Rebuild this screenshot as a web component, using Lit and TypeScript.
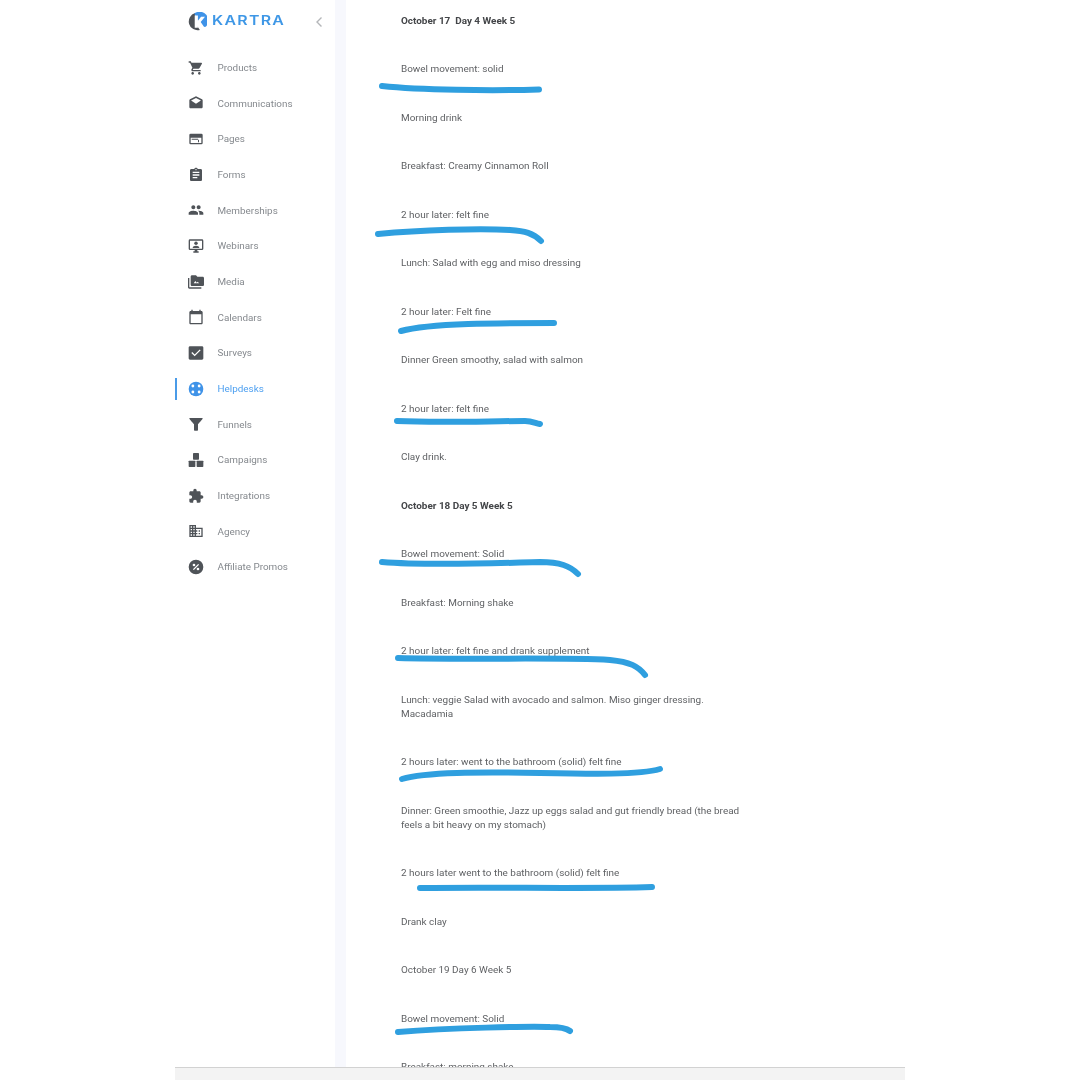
import { LitElement, html, css, svg } from "lit";
import { customElement } from "lit/decorators.js";

const NAV: [string, unknown, boolean?][] = [
  ["Products", svg`<path d="M7 18c-1.1 0-1.99.9-1.99 2S5.9 22 7 22s2-.9 2-2-.9-2-2-2zM1 2v2h2l3.6 7.59-1.35 2.45c-.16.28-.25.61-.25.96 0 1.1.9 2 2 2h12v-2H7.42c-.14 0-.25-.11-.25-.25l.03-.12.9-1.63h7.45c.75 0 1.41-.41 1.75-1.03l3.58-6.49c.08-.14.12-.31.12-.48 0-.55-.45-1-1-1H5.21l-.94-2H1zm16 16c-1.1 0-1.99.9-1.99 2s.89 2 1.99 2 2-.9 2-2-.9-2-2-2z"/>`],
  ["Communications", svg`<path d="M22 8c0-.72-.37-1.35-.94-1.7L12 2 2.950 6.300C2.380 6.650 2 7.280 2 8v10c0 1.100.9 2 2 2h16c1.100 0 2-.9 2-2V8zM12 13L4.600 8.300 12 4.500l7.400 3.800L12 13z"/>`],
  ["Pages", svg`<path fill-rule="evenodd" d="M20 4H4a2 2 0 00-2 2v12a2 2 0 002 2h16a2 2 0 002-2V6a2 2 0 00-2-2zm0 14H4V10h16v8zM5.500 11.500H15V13H5.500zM15 13h1.500v4H15z"/>`],
  ["Forms", svg`<path d="M19 3h-4.18C14.4 1.84 13.3 1 12 1c-1.3 0-2.4.84-2.82 2H5c-1.1 0-2 .9-2 2v14c0 1.1.9 2 2 2h14c1.1 0 2-.9 2-2V5c0-1.1-.9-2-2-2zm-7 0c.55 0 1 .45 1 1s-.45 1-1 1-1-.45-1-1 .45-1 1-1zm2 14H7v-2h7v2zm3-4H7v-2h10v2zm0-4H7V7h10v2z"/>`],
  ["Memberships", svg`<path d="M16 11c1.66 0 2.99-1.34 2.99-3S17.66 5 16 5c-1.66 0-3 1.34-3 3s1.34 3 3 3zm-8 0c1.66 0 2.99-1.34 2.99-3S9.66 5 8 5C6.34 5 5 6.34 5 8s1.34 3 3 3zm0 2c-2.33 0-7 1.17-7 3.5V19h14v-2.5c0-2.33-4.67-3.5-7-3.5zm8 0c-.29 0-.62.02-.97.05 1.16.84 1.97 1.97 1.97 3.45V19h6v-2.5c0-2.33-4.67-3.5-7-3.5z"/>`],
  ["Webinars", svg`<path fill-rule="evenodd" d="M21 2H3a2 2 0 00-2 2v12a2 2 0 002 2h7v2H8v2h8v-2h-2v-2h7a2 2 0 002-2V4a2 2 0 00-2-2zm0 14H3V4h18v12z"/><circle cx="12" cy="8" r="2.600"/><path d="M7 15c0-2.200 2.500-3.400 5-3.400s5 1.200 5 3.400z"/>`],
  ["Media", svg`<path d="M2 6H0v5h.01L0 20c0 1.100.9 2 2 2h18v-2H2V6zm20-2h-8l-2-2H6c-1.100 0-1.990.9-1.990 2L4 16c0 1.100.9 2 2 2h16c1.100 0 2-.9 2-2V6c0-1.100-.9-2-2-2zM8.500 14l2.500-3.500 2 2.500 1.200-1.500 2.800 2.500H8.500z"/>`],
  ["Calendars", svg`<path d="M20 3h-1V1h-2v2H7V1H5v2H4c-1.1 0-2 .9-2 2v16c0 1.1.9 2 2 2h16c1.1 0 2-.9 2-2V5c0-1.1-.9-2-2-2zm0 18H4V8h16v13z"/>`],
  ["Surveys", svg`<path d="M21 2H3C1.900 2 1 2.900 1 4v16c0 1.100.9 2 2 2h18c1.100 0 2-.9 2-2V4c0-1.100-.9-2-2-2zm-11 15l-5-5 1.410-1.410L10 14.170l7.590-7.590L19 8l-9 9z"/>`],
  ["Helpdesks", svg`<circle cx="12" cy="12" r="11"/><g fill="#fff"><circle cx="7.300" cy="7.500" r="2.100"/><circle cx="16.700" cy="7.500" r="2.100"/><circle cx="7.300" cy="16.500" r="2.100"/><circle cx="16.700" cy="16.500" r="2.100"/></g>`, true],
  ["Funnels", svg`<path d="M2.250 4.610C4.270 7.200 9 12.500 9 12.500V21c0 .55.45 1 1 1h4c.55 0 1-.45 1-1v-8.500s4.720-5.300 6.740-7.890C22.250 3.950 21.780 3 20.950 3H3.040c-.83 0-1.300.95-.79 1.610z"/>`],
  ["Campaigns", svg`<rect x="7.500" y="1.500" width="9" height="10" rx="1"/><rect x="1" y="13" width="10" height="9.500" rx="1"/><rect x="13" y="13" width="10" height="9.500" rx="1"/>`],
  ["Integrations", svg`<path d="M20.500 11H19V7c0-1.100-.9-2-2-2h-4V3.500C13 2.120 11.880 1 10.500 1S8 2.120 8 3.500V5H4c-1.100 0-1.990.9-1.990 2v3.800H3.500c1.490 0 2.700 1.210 2.700 2.700s-1.210 2.700-2.700 2.700H2V20c0 1.100.9 2 2 2h3.800v-1.500c0-1.490 1.210-2.700 2.700-2.700 1.490 0 2.700 1.210 2.700 2.700V22H17c1.100 0 2-.9 2-2v-4h1.500c1.380 0 2.500-1.120 2.500-2.500S21.880 11 20.500 11z"/>`],
  ["Agency", svg`<path d="M12 7V3H2v18h20V7H12zM6 19H4v-2h2v2zm0-4H4v-2h2v2zm0-4H4V9h2v2zm0-4H4V5h2v2zm4 12H8v-2h2v2zm0-4H8v-2h2v2zm0-4H8V9h2v2zm0-4H8V5h2v2zm10 12h-8v-2h2v-2h-2v-2h2v-2h-2V9h8v10zm-2-8h-2v2h2v-2zm0 4h-2v2h2v-2z"/>`],
  ["Affiliate Promos", svg`<path fill-rule="evenodd" d="M12 1a11 11 0 100 22 11 11 0 000-22zM7.400 15.200l7.800-7.800 1.400 1.400-7.800 7.800zM9 7a2 2 0 110 4 2 2 0 010-4zm6 6a2 2 0 110 4 2 2 0 010-4z"/>`],
];

const BLOCKS: [string, boolean?][] = [
  ["October 17  Day 4 Week 5", true],
  ["Bowel movement: solid"],
  ["Morning drink"],
  ["Breakfast: Creamy Cinnamon Roll"],
  ["2 hour later: felt fine"],
  ["Lunch: Salad with egg and miso dressing"],
  ["2 hour later: Felt fine"],
  ["Dinner Green smoothy, salad with salmon"],
  ["2 hour later: felt fine"],
  ["Clay drink."],
  ["October 18 Day 5 Week 5", true],
  ["Bowel movement: Solid"],
  ["Breakfast: Morning shake"],
  ["2 hour later: felt fine and drank supplement"],
  ["Lunch: veggie Salad with avocado and salmon. Miso ginger dressing. Macadamia"],
  ["2 hours later: went to the bathroom (solid) felt fine"],
  ["Dinner: Green smoothie, Jazz up eggs salad and gut friendly bread (the bread feels a bit heavy on my stomach)"],
  ["2 hours later went to the bathroom (solid) felt fine"],
  ["Drank clay"],
  ["October 19 Day 6 Week 5"],
  ["Bowel movement: Solid"],
  ["Breakfast: morning shake"],
];

const STROKES = [
  "M382 86 C420 90 490 91 539 89.500",
  "M378 234 C420 230 480 228 510 230 C525 231 533 233 541 241",
  "M401 331 C430 323 500 323 554 323",
  "M397 421 C440 423 490 421 525 421 C532 421 535 423 540 424",
  "M382 562 C430 566 500 563 540 562 C560 562 570 566 578 574",
  "M398 658 C470 660 560 657 610 660 C630 662 638 666 645 675",
  "M402 779 C425 772 480 772 540 773 C590 774 640 775 660 769",
  "M420 888 C500 887 590 889 652 887",
  "M398 1032 C450 1028 530 1026 550 1027 C560 1027 566 1028 570 1031",
];

@customElement("app-root")
export class AppRoot extends LitElement {
  static styles = css`
    :host {
      display: block;
      position: relative;
      width: 1080px;
      height: 1080px;
      overflow: hidden;
      background: #fff;
      font-family: Roboto, "Liberation Sans", sans-serif;
    }
    .frame {
      width: 730px;
      height: 1080px;
      margin-left: 175px;
      display: flex;
      flex-direction: column;
    }
    .app {
      flex: 1;
      min-height: 0;
      display: flex;
      overflow: hidden;
      filter: blur(0.35px);
    }
    .side {
      width: 160px;
      flex: none;
    }
    .brand {
      height: 43px;
      padding: 0 10px 0 13px;
      display: flex;
      align-items: center;
      gap: 5px;
    }
    .logo {
      width: 19px;
      height: 19px;
      flex: none;
    }
    .word {
      font-family: Inter, sans-serif;
      font-size: 12.500px;
      font-weight: 600;
      letter-spacing: 1px;
      color: #3e97e6;
      line-height: 1;
      transform: scaleX(1.27);
      transform-origin: left center;
    }
    .chev {
      width: 12px;
      height: 14px;
      margin-left: auto;
      flex: none;
    }
    nav {
      padding-top: 6.700px;
    }
    .item {
      height: 35.680px;
      display: flex;
      align-items: center;
      gap: 13.500px;
      padding-left: 13px;
      box-sizing: border-box;
      font-size: 9.900px;
      color: #85898e;
      position: relative;
    }
    .item svg {
      width: 16px;
      height: 16px;
      fill: #4f5358;
      flex: none;
    }
    .item.on {
      color: #4c9ff0;
    }
    .item.on svg {
      fill: #3f93e8;
    }
    .item.on::before {
      content: "";
      position: absolute;
      left: 0;
      top: 7px;
      bottom: 6px;
      width: 2px;
      background: #4a9be8;
    }
    .gutter {
      width: 11px;
      flex: none;
      background: #f7f8fd;
    }
    main {
      flex: 1;
      padding: 13.500px 0 0 55px;
      min-width: 0;
    }
    p {
      margin: 0 0 34.500px;
      width: 345px;
      font-size: 9.930px;
      line-height: 14px;
      color: #5f6164;
      white-space: pre-wrap;
    }
    p.b {
      font-weight: 700;
      color: #434548;
    }
    .bar {
      height: 13px;
      flex: none;
      box-sizing: border-box;
      background: #f3f3f3;
      border-top: 1px solid #d2d2d2;
    }
    .ink {
      position: absolute;
      left: 0;
      top: 0;
      width: 1080px;
      height: 1080px;
      pointer-events: none;
    }
    .ink path {
      fill: none;
      stroke: #2f9fdf;
      stroke-width: 6px;
      stroke-linecap: round;
      stroke-linejoin: round;
    }
  `;

  render() {
    return html`
      <div class="frame">
        <div class="app">
          <aside class="side">
            <div class="brand">
              <svg class="logo" viewBox="0 0 24 24">
                <path fill="#4f5358" d="M9 1.400A11 11 0 0015 22.600L9 14z" />
                <path fill="#3f93e8" d="M8 2A11 11 0 0122.500 18.500L19 19l-6-6.500z" />
                <path fill="#fff" d="M8.500 4.500h4v6.500l4-5h5l-5.500 6.500 5 7.500h-5l-3.500-5.500v5.500h-4z" />
              </svg>
              <span class="word">KARTRA</span>
              <svg class="chev" viewBox="0 0 12 14">
                <path d="M8.500 2.500 4 7l4.500 4.500" fill="none" stroke="#b4b6b9" stroke-width="1.400" />
              </svg>
            </div>
            <nav>
              ${NAV.map(
                ([label, icon, on]) => html`
                  <div class="item ${on ? "on" : ""}">
                    <svg viewBox="0 0 24 24">${icon}</svg><span>${label}</span>
                  </div>
                `,
              )}
            </nav>
          </aside>
          <div class="gutter"></div>
          <main>
            ${BLOCKS.map(([t, b]) => html`<p class=${b ? "b" : ""}>${t}</p>`)}
          </main>
        </div>
        <div class="bar"></div>
      </div>
      <svg class="ink" viewBox="0 0 1080 1080">
        ${STROKES.map((d) => svg`<path d=${d} />`)}
      </svg>
    `;
  }
}
